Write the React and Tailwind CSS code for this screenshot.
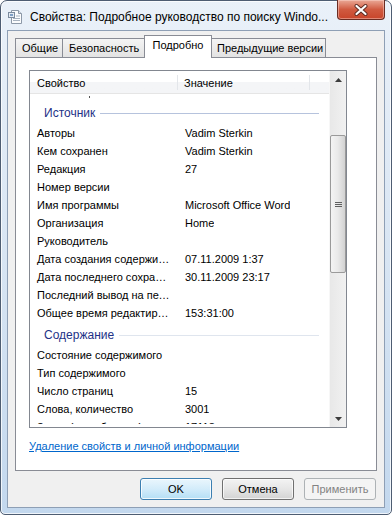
import React from "react";

const font = "font-['Liberation_Sans',Arial,sans-serif]";

const source = [
  ["Авторы", "Vadim Sterkin"],
  ["Кем сохранен", "Vadim Sterkin"],
  ["Редакция", "27"],
  ["Номер версии", ""],
  ["Имя программы", "Microsoft Office Word"],
  ["Организация", "Home"],
  ["Руководитель", ""],
  ["Дата создания содержимого", "07.11.2009 1:37"],
  ["Дата последнего сохранения", "30.11.2009 23:17"],
  ["Последний вывод на печать", ""],
  ["Общее время редактирования", "153:31:00"],
];

const content = [
  ["Состояние содержимого", ""],
  ["Тип содержимого", ""],
  ["Число страниц", "15"],
  ["Слова, количество", "3001"],
  ["Знаки (с пробелами)", "17118"],
];

function Row({ name, value }) {
  return (
    <div className="flex h-[18px] shrink-0 items-center text-[11px] leading-[13px] text-black">
      <div className="w-[148px] shrink-0 truncate pl-[7px] pr-[6px]">{name}</div>
      <div className="truncate pl-[7px]">{value}</div>
    </div>
  );
}

function Group({ title, line }) {
  return (
    <div className="flex h-[24px] shrink-0 items-end pb-[3px] pl-[14px] pr-[10px]">
      <span className="text-[12px] leading-[15px] text-[#1e3287]">{title}</span>
      <div className={`mb-[7px] ml-[5px] h-px flex-1 ${line}`} />
    </div>
  );
}

function Tab({ label, selected, className }) {
  if (selected) {
    return (
      <div
        className={`relative z-10 -mb-px flex h-[23px] items-start justify-center border-x border-t border-[#898c95] bg-white pt-[3px] text-[11px] leading-[13px] text-black ${className}`}
      >
        {label}
      </div>
    );
  }
  return (
    <div
      className={`flex h-[19px] items-center border-x border-t border-[#898c95] bg-gradient-to-b from-[#f4f4f4] to-[#e3e3e3] pl-[6px] text-[11px] leading-[13px] text-black ${className}`}
    >
      {label}
    </div>
  );
}

function Arrow({ up }) {
  return (
    <svg width="7" height="4" viewBox="0 0 7 4">
      {up ? (
        <polygon points="0,4 7,4 3.5,0" fill="#3c3c3c" />
      ) : (
        <polygon points="0,0 7,0 3.5,4" fill="#3c3c3c" />
      )}
    </svg>
  );
}

function Button({ children, kind }) {
  const styles = {
    default:
      "border-[#3c7fb1] bg-gradient-to-b from-[#eaf6fd] via-[#d3ecfa] to-[#b4dff5] text-black shadow-[inset_0_0_0_1px_rgba(255,255,255,0.8)]",
    normal:
      "border-[#707070] bg-gradient-to-b from-[#f3f3f3] via-[#e6e6e6] to-[#d3d3d3] text-black shadow-[inset_0_0_0_1px_rgba(255,255,255,0.7)]",
    disabled: "border-[#adb2b5] bg-[#f4f4f4] text-[#838383]",
  };
  return (
    <div
      className={`flex h-[22px] w-[72px] items-center justify-center rounded-[3px] border text-[11px] leading-[13px] ${styles[kind]}`}
    >
      {children}
    </div>
  );
}

function DocIcon() {
  return (
    <svg width="16" height="16" viewBox="0 0 16 16">
      <path d="M3.5 1.5h7l3 3v10h-10z" fill="#fbfcfd" stroke="#8d99a8" />
      <path d="M10.5 1.5v3h3" fill="#dde4ec" stroke="#8d99a8" />
      <rect x="0.5" y="3.5" width="6" height="5" fill="#e4ebf3" stroke="#7b8a9d" />
      <rect x="2" y="5" width="3" height="2" fill="#7f9fc4" />
      <path d="M8 7h4M5 9.5h7M5 11.5h7" stroke="#a8b3c0" />
    </svg>
  );
}

export default function App() {
  return (
    <div className={`h-[515px] w-[392px] bg-white ${font}`}>
      <div className="flex h-[515px] w-[392px] flex-col rounded-b-[5px] rounded-t-[7px] border border-[#4e5d72] bg-gradient-to-b from-[#eaf1f9] via-[#d8e5f3] to-[#c3d8ee] shadow-[inset_0_0_0_1px_rgba(255,255,255,0.75)]">
        {/* title bar */}
        <div className="flex h-[29px] shrink-0 items-start pl-[7px]">
          <div className="mt-[8px]">
            <DocIcon />
          </div>
          <span className="ml-[6px] mt-[9px] whitespace-nowrap text-[12px] leading-[14px] text-black">
            Свойства: Подробное руководство по поиску Windo...
          </span>
          <div className="-mt-px ml-auto mr-[6px] flex h-[20px] w-[48px] items-center justify-center rounded-b-[4px] border border-t-0 border-[#6a2c22] bg-gradient-to-b from-[#e9a896] via-[#d05a40] to-[#c8442a] shadow-[inset_0_0_0_1px_rgba(255,220,210,0.45)]">
            <svg width="14" height="12" viewBox="0 0 14 12">
              <path d="M2.5 2l9 8M11.5 2l-9 8" stroke="#5a2a22" strokeWidth="4" strokeLinecap="round" />
              <path d="M2.5 2l9 8M11.5 2l-9 8" stroke="#ffffff" strokeWidth="2.2" strokeLinecap="round" />
            </svg>
          </div>
        </div>

        {/* client */}
        <div className="mx-[6px] mb-[6px] flex flex-1 flex-col border border-[#8e9fb5] bg-[#f0f0f0] px-[7px] pt-[4px]">
          <div className="flex h-[22px] items-end">
            <Tab label="Общие" className="w-[48px]" />
            <Tab label="Безопасность" className="-ml-px w-[85px]" />
            <Tab label="Подробно" selected className="-ml-[3px] -mr-[2px] w-[68px]" />
            <Tab label="Предыдущие версии" className="w-[116px]" />
          </div>

          <div className="flex h-[414px] flex-col border border-[#898c95] bg-white pl-[13px] pt-[12px]">
            {/* list view */}
            <div className="flex h-[358px] w-[318px] border border-[#828790] bg-white">
              <div className="flex min-w-0 flex-1 flex-col overflow-hidden">
                <div className="flex h-[23px] shrink-0 items-center border-b border-[#e5e5e5] bg-gradient-to-b from-white from-50% to-[#f4f5f7] to-50% text-[11px] leading-[13px] text-black">
                  <div className="w-[148px] shrink-0 border-r border-[#e3e6ea] pl-[7px] pt-[2px]">Свойство</div>
                  <div className="w-[132px] shrink-0 border-r border-[#e3e6ea] pl-[6px] pt-[2px]">Значение</div>
                </div>
                <div className="mb-[3px] flex min-h-0 flex-1 flex-col overflow-hidden">
                  <div className="h-[6px] shrink-0 pl-[59px] pt-[2px]">
                    <div className="h-[2px] w-px bg-[#555555]" />
                  </div>
                  <Group title="Источник" line="bg-[#b6c3dd]" />
                  {source.map(([n, v]) => (
                    <Row key={n} name={n} value={v} />
                  ))}
                  <Group title="Содержание" line="bg-[#dfe5ee]" />
                  {content.map(([n, v]) => (
                    <Row key={n} name={n} value={v} />
                  ))}
                </div>
              </div>
              {/* scrollbar */}
              <div className="flex w-[17px] shrink-0 flex-col border-l border-[#f7f7f7] bg-gradient-to-r from-[#e8e8e8] to-[#f1f1f1]">
                <div className="flex h-[17px] shrink-0 items-center justify-center">
                  <Arrow up />
                </div>
                <div className="mt-[47px] flex h-[138px] shrink-0 items-center justify-center rounded-[2px] border border-[#9a9a9a] bg-gradient-to-r from-[#f4f4f4] via-[#e9e9e9] to-[#d2d2d2]">
                  <div className="flex flex-col gap-[1px]">
                    <div className="h-px w-[7px] bg-[#5f6060]" />
                    <div className="h-px w-[7px] bg-[#5f6060]" />
                    <div className="h-px w-[7px] bg-[#5f6060]" />
                  </div>
                </div>
                <div className="mt-auto flex h-[17px] shrink-0 items-center justify-center">
                  <Arrow />
                </div>
              </div>
            </div>

            <div className="mt-[12px] text-[11px] leading-[13px] text-[#0066cc] underline">
              Удаление свойств и личной информации
            </div>
          </div>

          <div className="mt-[7px] flex justify-end gap-[10px] pr-px">
            <Button kind="default">OK</Button>
            <Button kind="normal">Отмена</Button>
            <Button kind="disabled">Применить</Button>
          </div>
        </div>
      </div>
    </div>
  );
}
